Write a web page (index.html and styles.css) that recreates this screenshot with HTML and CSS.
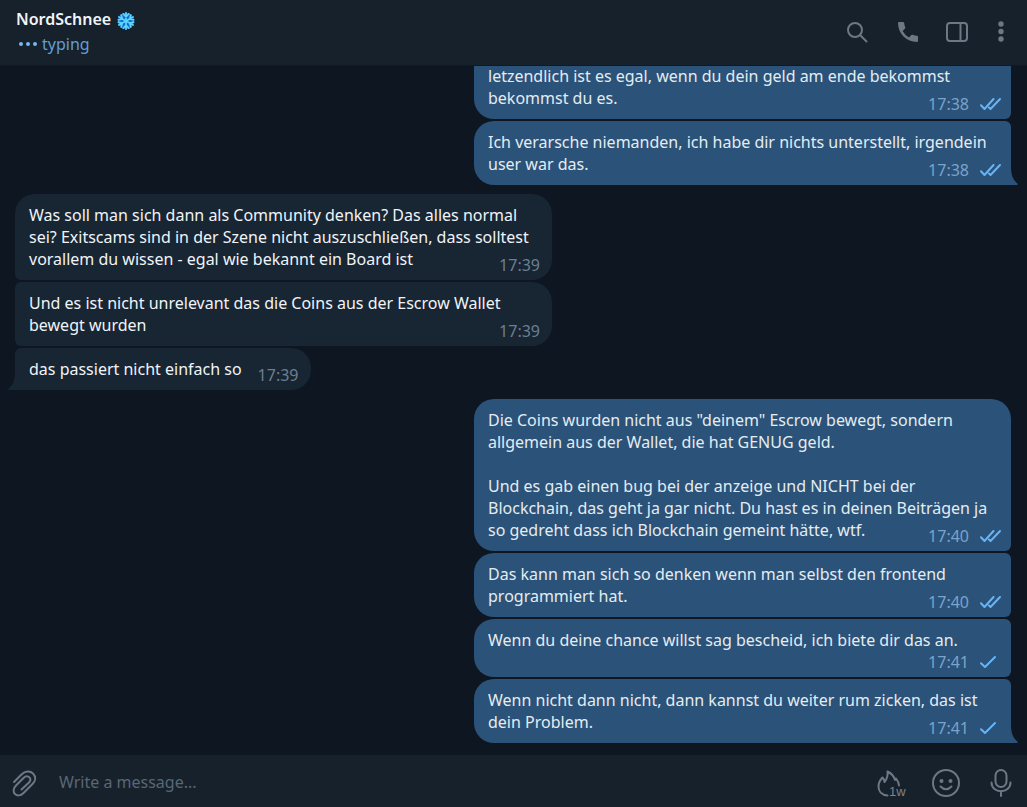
FILE: index.html
```html
<!DOCTYPE html>
<html lang="de">
<head>
  <meta charset="UTF-8" />
  <meta name="viewport" content="width=device-width, initial-scale=1.0" />
  <title>NordSchnee</title>
  <link rel="stylesheet" href="styles.css">
</head>
<body>
  <!-- tick icons, reused by every sent message -->
  <svg class="sprite" aria-hidden="true">
    <symbol id="sent" viewBox="0 0 22 14">
      <path d="M2 8.200 L6 12 L16 2" />
    </symbol>
    <symbol id="read" viewBox="0 0 22 14">
      <path d="M2 8.200 L5.500 12 L14.500 2 M10 10.500 L11.500 12 L21 2" />
    </symbol>
  </svg>

  <header class="topbar">
    <div class="peer">
      <h1 class="name">NordSchnee
        <svg class="flake" viewBox="0 0 18 18" aria-hidden="true">
          <circle cx="9" cy="9" r="8.200" fill="#0b6fc4" />
          <g fill="none" stroke="#5fd2ff" stroke-width="1.700" stroke-linecap="round">
            <path id="arm" d="M9 9 V0.800 M6.200 1.800 L9 4.800 L11.800 1.800" />
            <use href="#arm" transform="rotate(60 9 9)" />
            <use href="#arm" transform="rotate(120 9 9)" />
            <use href="#arm" transform="rotate(180 9 9)" />
            <use href="#arm" transform="rotate(240 9 9)" />
            <use href="#arm" transform="rotate(300 9 9)" />
          </g>
        </svg>
      </h1>
      <p class="status"><span class="dots"><i></i><i></i><i></i></span>typing</p>
    </div>
    <nav class="tools">
      <button class="icon" aria-label="Search">
        <svg width="24" height="24" viewBox="0 0 24 24"><circle cx="8" cy="10" r="7" /><path d="M13 15 L19.500 21.500" /></svg>
      </button>
      <button class="icon" aria-label="Call">
        <svg width="24" height="24" viewBox="0 0 24 24"><path class="solid" d="M3 2 h4 q1 0 1.200 1 q.2 2.500 1 4.300 q.3 .8-.3 1.400 l-2.300 2.300 q2.400 4.400 6.400 6.400 l2.300-2.300 q.6-.6 1.400-.3 q1.800 .8 4.300 1 q1 .1 1 1.200 v4 q0 1-1 1 C10.500 22 2 13.500 2 3 q0-1 1-1z" /></svg>
      </button>
      <button class="icon" aria-label="Info panel">
        <svg width="24" height="24" viewBox="0 0 24 24"><rect x="2" y="3" width="20" height="18" rx="3" /><path d="M15.500 3 V21" /></svg>
      </button>
      <button class="icon" aria-label="Menu">
        <svg width="14" height="24" viewBox="0 0 14 24"><g class="solid"><circle cx="7" cy="4" r="2.700" /><circle cx="7" cy="11.500" r="2.700" /><circle cx="7" cy="19" r="2.700" /></g></svg>
      </button>
    </nav>
  </header>

  <main class="chat">
    <section class="group out">
      <article class="bubble continued">
        <p>letzendlich ist es egal, wenn du dein geld am ende bekommst bekommst du es.</p>
        <div class="meta"><time>17:38</time><svg class="tick"><use href="#read" /></svg></div>
      </article>
      <article class="bubble">
        <p>Ich verarsche niemanden, ich habe dir nichts unterstellt, irgendein user war das.</p>
        <div class="meta"><time>17:38</time><svg class="tick"><use href="#read" /></svg></div>
      </article>
    </section>

    <section class="group in">
      <article class="bubble">
        <p>Was soll man sich dann als Community denken? Das alles normal sei? Exitscams sind in der Szene nicht auszuschließen, dass solltest vorallem du wissen - egal wie bekannt ein Board ist</p>
        <div class="meta"><time>17:39</time></div>
      </article>
      <article class="bubble">
        <p>Und es ist nicht unrelevant das die Coins aus der Escrow Wallet bewegt wurden</p>
        <div class="meta"><time>17:39</time></div>
      </article>
      <article class="bubble short">
        <p>das passiert nicht einfach so</p>
        <div class="meta"><time>17:39</time></div>
      </article>
    </section>

    <section class="group out">
      <article class="bubble">
        <p>Die Coins wurden nicht aus "deinem" Escrow bewegt, sondern allgemein aus der Wallet, die hat GENUG geld.<br><br>Und es gab einen bug bei der anzeige und NICHT bei der Blockchain, das geht ja gar nicht. Du hast es in deinen Beiträgen ja so gedreht dass ich Blockchain gemeint hätte, wtf.</p>
        <div class="meta"><time>17:40</time><svg class="tick"><use href="#read" /></svg></div>
      </article>
      <article class="bubble">
        <p>Das kann man sich so denken wenn man selbst den frontend programmiert hat.</p>
        <div class="meta"><time>17:40</time><svg class="tick"><use href="#read" /></svg></div>
      </article>
      <article class="bubble full-line">
        <p>Wenn du deine chance willst sag bescheid, ich biete dir das an.</p>
        <div class="meta"><time>17:41</time><svg class="tick"><use href="#sent" /></svg></div>
      </article>
      <article class="bubble">
        <p>Wenn nicht dann nicht, dann kannst du weiter rum zicken, das ist dein Problem.</p>
        <div class="meta"><time>17:41</time><svg class="tick"><use href="#sent" /></svg></div>
      </article>
    </section>
  </main>

  <form class="composer">
    <button type="button" class="icon" aria-label="Attach file">
      <svg width="32" height="32" viewBox="0 0 32 32"><path d="M6 15 L13.500 7.500 C17 4 22 3.500 25 6.500 C28.500 10 27.500 14 24.500 17 L15.500 26 C12.500 29 9 29 7 27 C5 25 5 21.500 8 18.500 L15.500 11 C17.500 9 20 9 21.500 10.500 C23 12 22.500 14 21 15.500 L13.500 22.500" /></svg>
    </button>
    <input class="message" type="text" placeholder="Write a message..." aria-label="Write a message">
    <button type="button" class="icon" aria-label="Auto-delete after 1 week">
      <svg width="32" height="32" viewBox="0 0 32 32"><path d="M12.500 28.500 C6.500 28 3.500 24 3.500 19.500 C3.500 16 5 13 7.500 10.500 C8.500 11.500 9.500 13 9.500 15 C12 12 13 8 12.500 4.500 C17 6.500 19 9.500 20 13 L21 11.500 C23 14 24 16 24 18.500" /><text x="14" y="29">1w</text></svg>
    </button>
    <button type="button" class="icon" aria-label="Emoji">
      <svg width="32" height="32" viewBox="0 0 32 32"><circle cx="16" cy="16" r="13" /><path d="M10.500 19.500 Q16 25 21.500 19.500" /><g class="solid"><circle cx="11.500" cy="14" r="2" /><circle cx="20.500" cy="14" r="2" /></g></svg>
    </button>
    <button type="button" class="icon" aria-label="Record voice message">
      <svg width="32" height="32" viewBox="0 0 32 32"><rect x="10.500" y="3" width="11" height="17" rx="5.500" /><path d="M6.500 15.500 C6.500 27 25.500 27 25.500 15.500 M16 24 V29" /></svg>
    </button>
  </form>
</body>
</html>
```
FILE: styles.css
```css
* {
  margin: 0;
  padding: 0;
  box-sizing: border-box;
}

body {
  display: flex;
  flex-direction: column;
  height: 100vh;
  overflow: hidden;
  background: #0e1621;
  color: #f0f4f8;
  font-family: "Noto Sans", "Open Sans", sans-serif;
  font-size: 16px;
  line-height: 22px;
}

.sprite {
  display: none;
}

/* header */
.topbar {
  display: flex;
  justify-content: space-between;
  align-items: center;
  flex: none;
  height: 66px;
  padding: 0 19px 2px 16px;
  background: #17212b;
  border-bottom: 1px solid #101924;
}

.peer {
  display: flex;
  flex-direction: column;
  gap: 3px;
}

.name {
  display: flex;
  align-items: center;
  gap: 6px;
  font-size: 16px;
  font-weight: 600;
}

.flake {
  width: 18px;
  height: 18px;
  margin-top: 3px;
}

.status {
  display: flex;
  align-items: center;
  color: #5f9fd6;
}

.dots {
  display: flex;
  gap: 3px;
  padding: 0 5px 0 3px;
}

.dots i {
  width: 4px;
  height: 4px;
  border-radius: 50%;
  background: #73b9f5;
}

.tools {
  display: flex;
  gap: 25px;
}

.icon {
  display: flex;
  flex: none;
  border: none;
  background: none;
  cursor: pointer;
}

.icon svg {
  fill: none;
  stroke: #6c7883;
  stroke-width: 2;
  stroke-linecap: round;
  stroke-linejoin: round;
}

.icon .solid {
  fill: #6c7883;
  stroke: none;
}

.icon text {
  fill: #7d8288;
  stroke: none;
  font-size: 13px;
  font-weight: 500;
}

/* messages */
.chat {
  display: flex;
  flex: 1;
  flex-direction: column;
  justify-content: flex-end;
  gap: 9px;
  min-height: 0;
  padding: 0 16px 12px 15px;
  overflow: hidden;
}

.group {
  display: flex;
  flex-direction: column;
  gap: 2px;
}

.out {
  align-items: flex-end;
  color: #e4ecf2;
}

.in {
  align-items: flex-start;
}

.bubble {
  position: relative;
  width: 100%;
  max-width: 537px;
  padding: 10px 10px 4px 14px;
}

.out .bubble {
  background: #2b5278;
  border-radius: 20px 6px 6px 20px;
}

.in .bubble {
  background: #182533;
  border-radius: 6px 20px 20px 6px;
}

.out .bubble:first-child {
  border-top-right-radius: 20px;
}

.in .bubble:first-child {
  border-top-left-radius: 20px;
}

.out .bubble.continued {
  border-top-left-radius: 0;
  border-top-right-radius: 0;
}

.out .bubble:last-child {
  border-bottom-right-radius: 0;
}

.in .bubble:last-child {
  border-bottom-left-radius: 0;
}

/* tail on the last bubble of a group */
.bubble:last-child::after {
  content: "";
  position: absolute;
  bottom: 0;
  left: 100%;
  width: 7px;
  height: 18px;
  background: #2b5278;
  clip-path: path("M0 0 C0 8 2 13 7 17 L6 18 H0 Z");
}

.in .bubble:last-child::after {
  left: -7px;
  background: #182533;
  clip-path: path("M7 0 C7 8 5 13 0 17 L1 18 H7 Z");
}

.bubble p {
  padding-right: 4px;
}

.meta {
  display: flex;
  justify-content: flex-end;
  align-items: center;
  gap: 10px;
  margin-top: -16px;
  color: #7aa3cc;
}

.in .meta {
  padding-right: 2px;
  color: #6d7f8f;
}

.full-line .meta {
  margin-top: 0;
}

.short {
  display: flex;
  gap: 12px;
  width: auto;
}

.short .meta {
  margin-top: 6px;
}

.tick {
  width: 22px;
  height: 14px;
  fill: none;
  stroke: #64b5f8;
  stroke-width: 2;
  stroke-linecap: round;
  stroke-linejoin: round;
}

/* message box */
.composer {
  display: flex;
  align-items: center;
  flex: none;
  gap: 23px;
  height: 52px;
  padding: 4px 10px 0 8px;
  background: #17212b;
}

.message {
  flex: 1;
  min-width: 0;
  margin-left: -4px;
  padding-bottom: 2px;
  border: none;
  outline: none;
  background: none;
  color: #f0f4f8;
  font: inherit;
}

.message::placeholder {
  color: #596775;
  opacity: 1;
}
```
